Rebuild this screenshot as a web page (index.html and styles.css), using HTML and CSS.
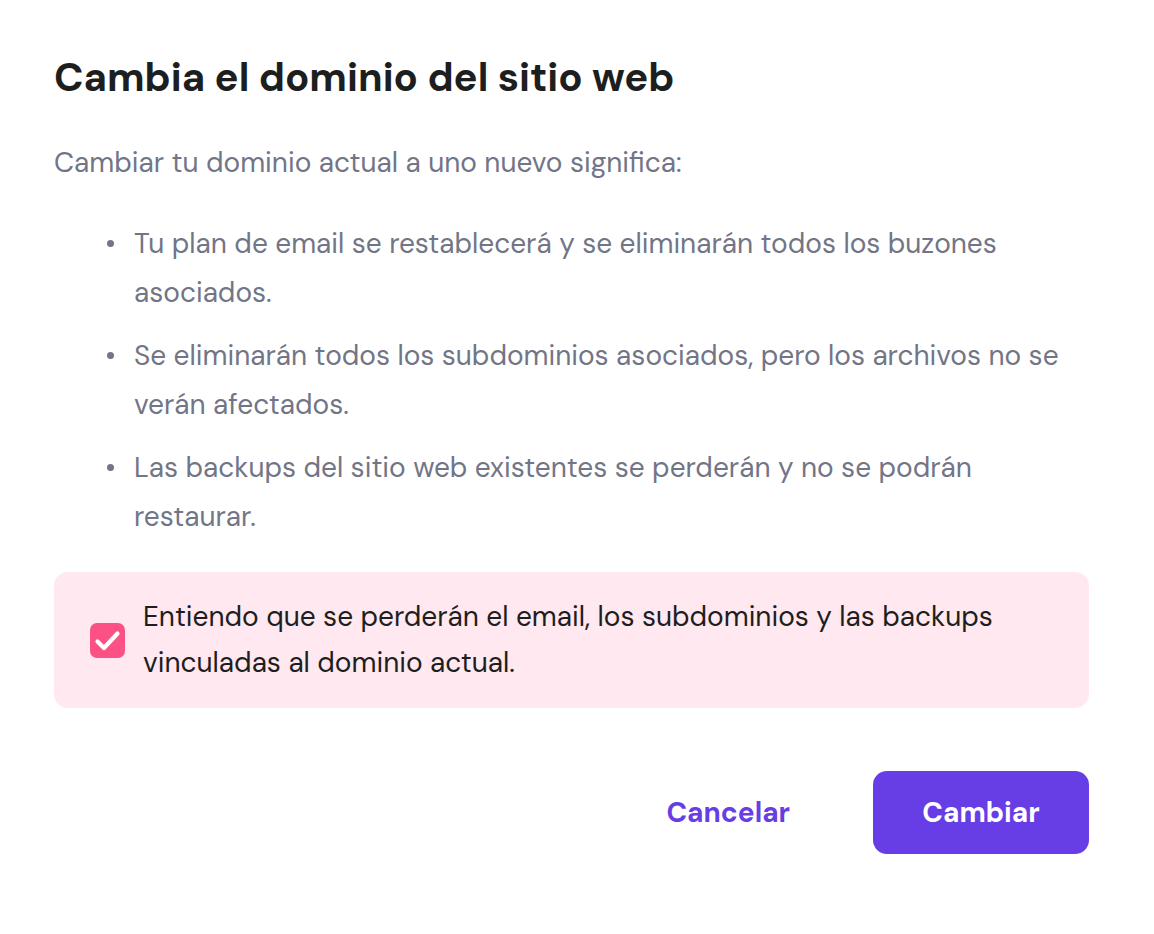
FILE: index.html
```html
<!DOCTYPE html>
<html lang="es">
<head>
<meta charset="utf-8">
<title>Cambia el dominio del sitio web</title>
<link rel="stylesheet" href="styles.css">
</head>
<body>
<div class="modal">
  <h1 class="title">Cambia el dominio del sitio web</h1>
  <p class="intro">Cambiar tu dominio actual a uno nuevo significa:</p>
  <ul class="list">
    <li>Tu plan de email se restablecerá y se eliminarán todos los buzones asociados.</li>
    <li>Se eliminarán todos los subdominios asociados, pero los archivos no se verán afectados.</li>
    <li>Las backups del sitio web existentes se perderán y no se podrán restaurar.</li>
  </ul>
  <label class="confirm">
    <span class="checkbox">
      <svg viewBox="0 0 35 35" width="35" height="35"><path d="M7.5 18.5l6.5 6.5L27.5 10.5" fill="none" stroke="#fff" stroke-width="4.2" stroke-linecap="round" stroke-linejoin="round"/></svg>
    </span>
    <span class="confirm-text">Entiendo que se perderán el email, los subdominios y las backups vinculadas al dominio actual.</span>
  </label>
  <div class="actions">
    <button class="btn-text">Cancelar</button>
    <button class="btn-primary">Cambiar</button>
  </div>
</div>
</body>
</html>
```

FILE: styles.css
```css
* { box-sizing: border-box; }
html, body { margin: 0; padding: 0; background: #fff; }
body { font-family: "DM Sans", Inter, "Noto Sans", sans-serif; }
.modal { padding: 52px 65px 0 54px; }
.title {
  margin: 0;
  font-size: 40px;
  line-height: 50px;
  font-weight: 700;
  color: #1d1e20;
}
.intro {
  margin: 36px 0 0;
  font-size: 28px;
  line-height: 50px;
  color: #727586;
}
.list {
  margin: 31px 0 0;
  padding: 0 0 0 80px;
  list-style: none;
  color: #727586;
  font-size: 28px;
  line-height: 49px;
}
.list li { margin-bottom: 14px; position: relative; }
.list li:last-child { margin-bottom: 0; }
.list li::before {
  content: "";
  position: absolute;
  left: -27px;
  top: 21px;
  width: 7px;
  height: 7px;
  border-radius: 50%;
  background: #727586;
}
.confirm {
  margin-top: 31px;
  display: flex;
  align-items: center;
  gap: 18px;
  background: #ffe8ef;
  border-radius: 14px;
  padding: 22px 36px 22px;
}
.checkbox {
  flex: 0 0 35px;
  width: 35px;
  height: 35px;
  border-radius: 7px;
  background: #fc5185;
  display: flex;
  align-items: center;
  justify-content: center;
}
.checkbox svg { display: block; }
.confirm-text {
  font-size: 28px;
  line-height: 46px;
  color: #1d1e20;
}
.actions {
  margin-top: 63px;
  display: flex;
  justify-content: flex-end;
  align-items: center;
  gap: 83px;
}
.btn-text, .btn-primary {
  font-family: inherit;
  font-size: 28px;
  font-weight: 700;
  border: 0;
  cursor: pointer;
}
.btn-text {
  background: none;
  color: #673de6;
  padding: 0;
}
.btn-primary {
  background: #673de6;
  color: #fff;
  width: 216px;
  height: 83px;
  border-radius: 14px;
}
```
